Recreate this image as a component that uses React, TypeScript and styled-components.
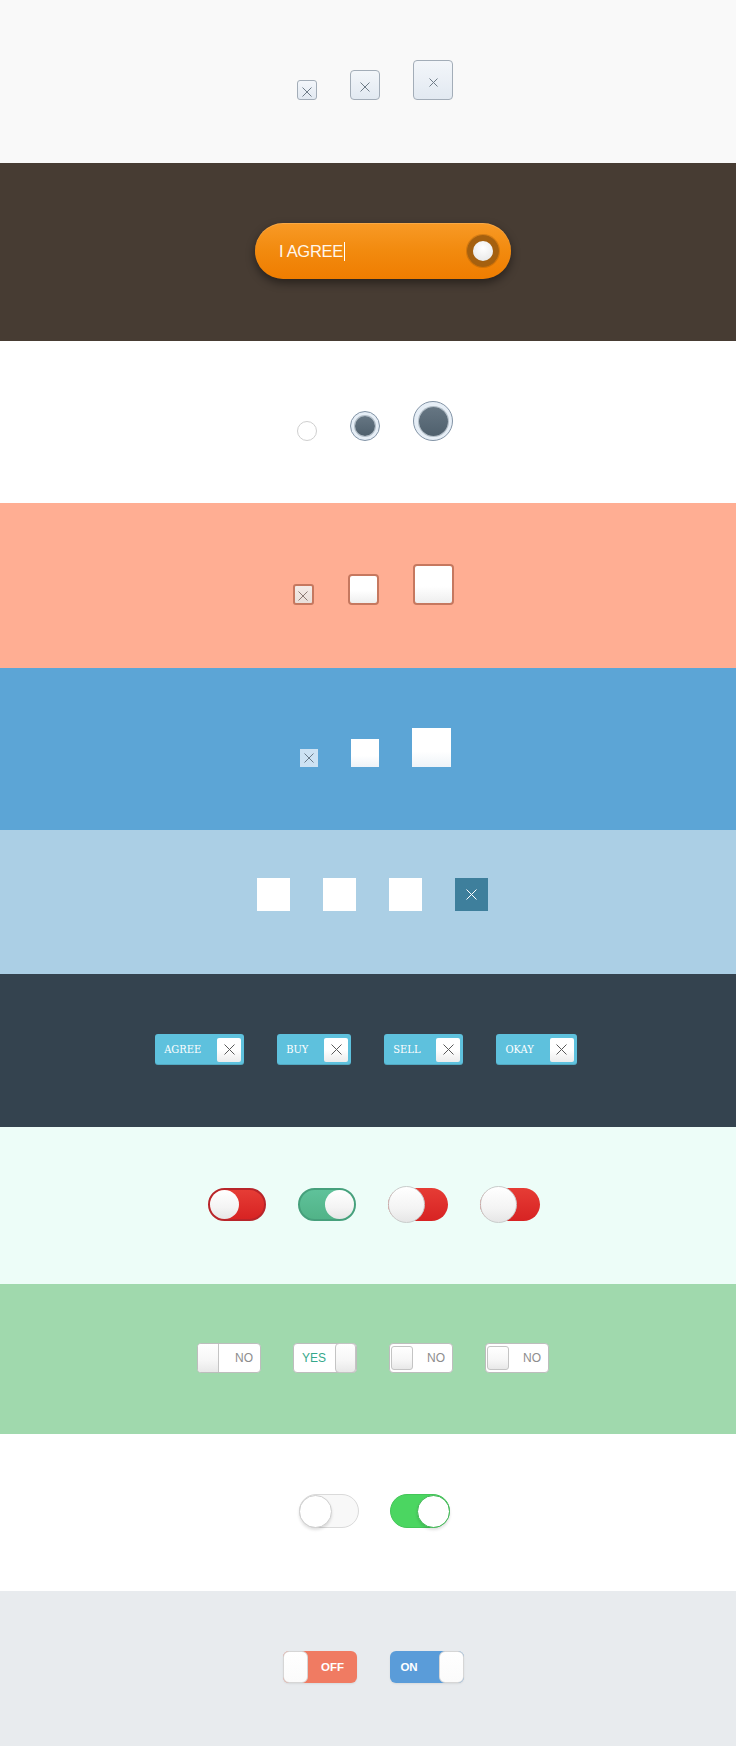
import React from "react";
import styled, { createGlobalStyle } from "styled-components";

const Global = createGlobalStyle`
  html, body { margin: 0; padding: 0; }
  body { font-family: "Liberation Sans", Arial, sans-serif; width: 736px; }
  * { box-sizing: border-box; }
`;

const Section = styled.section<{ $bg: string; $h: number; $pt: number; $shift?: number }>`
  background: ${(p) => p.$bg};
  height: ${(p) => p.$h}px;
  padding-top: ${(p) => p.$pt}px;
  padding-left: ${(p) => Math.max(0, (p.$shift ?? 0) * 2)}px;
  padding-right: ${(p) => Math.max(0, -(p.$shift ?? 0) * 2)}px;
  display: flex;
  justify-content: center;
  align-items: flex-start;
`;

const Row = styled.div<{ $gap: number; $align?: string }>`
  display: flex;
  align-items: ${(p) => p.$align ?? "flex-end"};
  gap: ${(p) => p.$gap}px;
`;

const XMark = ({ size, color, w = 1 }: { size: number; color: string; w?: number }) => (
  <svg width={size} height={size} viewBox={`0 0 ${size} ${size}`} style={{ display: "block" }}>
    <path d={`M0.5 0.5L${size - 0.5} ${size - 0.5}M${size - 0.5} 0.5L0.5 ${size - 0.5}`} stroke={color} strokeWidth={w} fill="none" />
  </svg>
);

/* Section 1: soft checkboxes */
const SoftBox = styled.div<{ $size: number }>`
  width: ${(p) => p.$size}px;
  height: ${(p) => p.$size}px;
  border: 1px solid #a3adb8;
  border-radius: ${(p) => (p.$size > 25 ? 4 : 3)}px;
  background: linear-gradient(#f3f6fa, #e2e9f1);
  display: flex;
  align-items: center;
  justify-content: center;
  padding-top: 4px;
`;

/* Section 2: agree pill */
const AgreePill = styled.div`
  width: 256px;
  height: 56px;
  border-radius: 28px;
  background: linear-gradient(#f89a26, #f28a0e 50%, #ef7d00);
  box-shadow: 0 4px 10px rgba(0, 0, 0, 0.45), inset 0 1px 0 rgba(255, 255, 255, 0.15);
  display: flex;
  align-items: center;
  justify-content: space-between;
  padding: 0 12px 0 24px;
`;

const AgreeText = styled.span`
  color: #fff7ec;
  font-family: "Liberation Sans", Arial, sans-serif;
  font-size: 16.5px;
  font-weight: 400;
  display: flex;
  align-items: center;
  letter-spacing: -0.3px;
`;

const Caret = styled.span`
  display: inline-block;
  width: 1px;
  height: 19px;
  background: #fff;
  margin-left: 1px;
`;

const AgreeKnob = styled.div`
  width: 32px;
  height: 32px;
  border-radius: 50%;
  border: 6px solid #a5600f;
  background: radial-gradient(circle at 50% 35%, #ffffff, #ececec 70%, #dcdcdc);
  box-shadow: 0 0 0 1px rgba(120, 60, 0, 0.25);
`;

/* Section 3: radios */
const Radio = styled.div<{ $size: number; $on?: boolean }>`
  width: ${(p) => p.$size}px;
  height: ${(p) => p.$size}px;
  border-radius: 50%;
  border: ${(p) => (p.$on ? "1px solid #8394a6" : "1.5px solid #cfcfcf")};
  background: ${(p) => (p.$on ? "#e6eef6" : "#fff")};
  display: flex;
  align-items: center;
  justify-content: center;
`;

const RadioDot = styled.div<{ $size: number }>`
  width: ${(p) => p.$size}px;
  height: ${(p) => p.$size}px;
  border-radius: 50%;
  background: linear-gradient(#667683, #4f606d);
  box-shadow: 0 0 0 1px rgba(79, 96, 109, 0.35);
`;

/* Section 4: salmon checkboxes */
const SalmonBox = styled.div<{ $size: number; $checked?: boolean }>`
  width: ${(p) => p.$size}px;
  height: ${(p) => p.$size}px;
  border: 2px solid #c6785f;
  border-radius: ${(p) => (p.$size > 25 ? 4 : 3)}px;
  background: ${(p) => (p.$checked ? "linear-gradient(#f4ece8, #e9dfda)" : "linear-gradient(#ffffff, #ffffff 55%, #eeeeee)")};
  display: flex;
  align-items: center;
  justify-content: center;
  padding-top: 3px;
`;

/* Section 5: flat blue checkboxes */
const FlatBox = styled.div<{ $size: number; $checked?: boolean }>`
  width: ${(p) => p.$size}px;
  height: ${(p) => p.$size}px;
  background: ${(p) => (p.$checked ? "#cde2f3" : "linear-gradient(#ffffff, #ffffff 60%, #eef3f8)")};
  display: flex;
  align-items: center;
  justify-content: center;
`;

/* Section 6: squares */
const Square = styled.div<{ $on?: boolean }>`
  width: 33px;
  height: 33px;
  background: ${(p) => (p.$on ? "#3e7f9c" : "#ffffff")};
  display: flex;
  align-items: center;
  justify-content: center;
`;

/* Section 7: tags */
const Tag = styled.div`
  height: 31px;
  display: flex;
  align-items: center;
  background: #5ec1dd;
  border-radius: 3px;
  box-shadow: inset 0 -1px 0 rgba(0, 0, 0, 0.12);
  padding: 0 3px 0 9px;
`;

const TagLabel = styled.span`
  font-family: "DejaVu Serif Condensed", "Liberation Serif", "Times New Roman", serif;
  font-stretch: condensed;
  font-size: 11px;
  color: #ffffff;
  margin-right: 16px;
  min-width: 22px;
  padding-bottom: 1px;
`;

const TagClose = styled.div`
  width: 24px;
  height: 24px;
  border-radius: 2px;
  background: linear-gradient(#ffffff, #ffffff 50%, #ececec);
  display: flex;
  align-items: center;
  justify-content: center;
`;

/* Section 8: round toggles */
const PillToggle = styled.div<{ $w: number; $color: string; $border?: string; $on?: boolean }>`
  width: ${(p) => p.$w}px;
  height: 33px;
  border-radius: 17px;
  background: ${(p) => p.$color};
  border: ${(p) => (p.$border ? `2px solid ${p.$border}` : "none")};
  display: flex;
  align-items: center;
  justify-content: ${(p) => (p.$on ? "flex-end" : "flex-start")};
`;

const PillKnob = styled.div<{ $size: number; $ring?: string }>`
  flex-shrink: 0;
  width: ${(p) => p.$size}px;
  height: ${(p) => p.$size}px;
  border-radius: 50%;
  background: linear-gradient(#ffffff, #f4f4f4 60%, #e6e6e6);
  border: ${(p) => (p.$ring ? `1px solid ${p.$ring}` : "none")};
`;

/* Section 9: slide switches */
const SlideSwitch = styled.div<{ $on?: boolean }>`
  width: 64px;
  height: 30px;
  border: 1px solid #bdbdbd;
  border-radius: 4px;
  background: #ffffff;
  display: flex;
  align-items: center;
  flex-direction: ${(p) => (p.$on ? "row-reverse" : "row")};
`;

const SlideKnob = styled.div<{ $inset?: boolean; $on?: boolean }>`
  flex-shrink: 0;
  width: ${(p) => (p.$inset ? 22 : 21)}px;
  height: ${(p) => (p.$inset ? 24 : p.$on ? 30 : 28)}px;
  margin: ${(p) => (p.$inset ? "0 0 0 1px" : "0")};
  background: linear-gradient(#ffffff, #f6f6f6 60%, #e8e8e8);
  border: 1px solid #c4c4c4;
  border-radius: 3px;
  ${(p) => (!p.$inset && !p.$on ? "border-width: 0 1px 0 0; border-radius: 3px 0 0 3px;" : "")}
  ${(p) => (p.$on ? "border-radius: 4px;" : "")}
`;

const SlideLabel = styled.span<{ $on?: boolean }>`
  flex: 1;
  font-size: 12px;
  font-family: "Liberation Sans", Arial, sans-serif;
  color: ${(p) => (p.$on ? "#35a88a" : "#8d8d8d")};
  text-align: ${(p) => (p.$on ? "left" : "right")};
  padding: ${(p) => (p.$on ? "0 0 0 8px" : "0 7px 0 0")};
`;

/* Section 10: iOS toggles */
const IosToggle = styled.div<{ $on?: boolean }>`
  width: 60px;
  height: 34px;
  border-radius: 17px;
  background: ${(p) => (p.$on ? "#4bd661" : "#f8f8f8")};
  border: 1px solid ${(p) => (p.$on ? "#44c659" : "#dadada")};
  display: flex;
  align-items: center;
  justify-content: ${(p) => (p.$on ? "flex-end" : "flex-start")};
`;

const IosKnob = styled.div<{ $on?: boolean }>`
  flex-shrink: 0;
  width: 33px;
  height: 33px;
  margin: ${(p) => (p.$on ? "0 -1px 0 0" : "0 0 0 -1px")};
  border-radius: 50%;
  background: #ffffff;
  border: 1px solid ${(p) => (p.$on ? "#3fb654" : "#cfcfcf")};
  box-shadow: 0 2px 3px rgba(0, 0, 0, 0.12);
`;

/* Section 11: flat labelled switches */
const FlatSwitch = styled.div<{ $color: string; $on?: boolean }>`
  width: 74px;
  height: 32px;
  border-radius: 6px;
  background: ${(p) => p.$color};
  display: flex;
  align-items: stretch;
  flex-direction: ${(p) => (p.$on ? "row-reverse" : "row")};
  box-shadow: 0 1px 2px rgba(0, 0, 0, 0.08);
`;

const FlatKnob = styled.div`
  width: 25px;
  flex-shrink: 0;
  border-radius: 6px;
  background: linear-gradient(#ffffff, #fbfbfb);
  border: 1px solid #d6d6d6;
`;

const FlatLabel = styled.span<{ $on?: boolean }>`
  flex: 1;
  display: flex;
  align-items: center;
  justify-content: center;
  color: #ffffff;
  font-weight: 700;
  font-size: 11.5px;
  font-family: "Liberation Sans", Arial, sans-serif;
  padding: ${(p) => (p.$on ? "0 10px 0 0" : "0 0 0 1px")};
`;

export default function App() {
  return (
    <>
      <Global />
      <Section $bg="#f9f9f9" $h={163} $pt={60} $shift={7}>
        <Row $gap={33}>
          <SoftBox $size={20}>
            <XMark size={10} color="#6f7c88" />
          </SoftBox>
          <SoftBox $size={30}>
            <XMark size={10} color="#6f7c88" />
          </SoftBox>
          <SoftBox $size={40}>
            <XMark size={9} color="#6f7c88" />
          </SoftBox>
        </Row>
      </Section>

      <Section $bg="#473c33" $h={178} $pt={60} $shift={15}>
        <AgreePill>
          <AgreeText>
            I AGREE
            <Caret />
          </AgreeText>
          <AgreeKnob />
        </AgreePill>
      </Section>

      <Section $bg="#ffffff" $h={162} $pt={60} $shift={7}>
        <Row $gap={33}>
          <Radio $size={20} />
          <Radio $size={30} $on>
            <RadioDot $size={20} />
          </Radio>
          <Radio $size={40} $on>
            <RadioDot $size={29} />
          </Radio>
        </Row>
      </Section>

      <Section $bg="#ffae93" $h={165} $pt={61} $shift={5}>
        <Row $gap={34}>
          <SalmonBox $size={21} $checked>
            <XMark size={10} color="#8a7a74" />
          </SalmonBox>
          <SalmonBox $size={31} />
          <SalmonBox $size={41} />
        </Row>
      </Section>

      <Section $bg="#5ca5d6" $h={162} $pt={60} $shift={7}>
        <Row $gap={33}>
          <FlatBox $size={18} $checked>
            <XMark size={10} color="#6a7b8a" />
          </FlatBox>
          <FlatBox $size={28} />
          <FlatBox $size={39} />
        </Row>
      </Section>

      <Section $bg="#abcfe5" $h={144} $pt={48} $shift={4}>
        <Row $gap={33}>
          <Square />
          <Square />
          <Square />
          <Square $on>
            <XMark size={11} color="#ffffff" />
          </Square>
        </Row>
      </Section>

      <Section $bg="#34434f" $h={153} $pt={60} $shift={-2}>
        <Row $gap={33} $align="center">
          {["AGREE", "BUY", "SELL", "OKAY"].map((t) => (
            <Tag key={t}>
              <TagLabel>{t}</TagLabel>
              <TagClose>
                <XMark size={11} color="#5a5a5a" />
              </TagClose>
            </Tag>
          ))}
        </Row>
      </Section>

      <Section $bg="#edfdf8" $h={157} $pt={61} $shift={6}>
        <Row $gap={32} $align="center">
          <PillToggle $w={58} $color="linear-gradient(#e63c35, #d72323)" $border="#b8252a">
            <PillKnob $size={29} />
          </PillToggle>
          <PillToggle $w={58} $color="linear-gradient(#5fc29a, #51b388)" $border="#46a07c" $on>
            <PillKnob $size={29} />
          </PillToggle>
          <PillToggle $w={60} $color="linear-gradient(#e63c35, #d72323)">
            <PillKnob $size={37} $ring="#c9cccb" />
          </PillToggle>
          <PillToggle $w={60} $color="linear-gradient(#e63c35, #d72323)">
            <PillKnob $size={37} $ring="#c9cccb" />
          </PillToggle>
        </Row>
      </Section>

      <Section $bg="#a0d9ad" $h={150} $pt={59} $shift={5}>
        <Row $gap={32} $align="center">
          <SlideSwitch>
            <SlideKnob />
            <SlideLabel>NO</SlideLabel>
          </SlideSwitch>
          <SlideSwitch $on>
            <SlideKnob $on />
            <SlideLabel $on>YES</SlideLabel>
          </SlideSwitch>
          <SlideSwitch>
            <SlideKnob $inset />
            <SlideLabel>NO</SlideLabel>
          </SlideSwitch>
          <SlideSwitch>
            <SlideKnob $inset />
            <SlideLabel>NO</SlideLabel>
          </SlideSwitch>
        </Row>
      </Section>

      <Section $bg="#ffffff" $h={157} $pt={60} $shift={6}>
        <Row $gap={31} $align="center">
          <IosToggle>
            <IosKnob />
          </IosToggle>
          <IosToggle $on>
            <IosKnob $on />
          </IosToggle>
        </Row>
      </Section>

      <Section $bg="#e8ebee" $h={155} $pt={60} $shift={5}>
        <Row $gap={33} $align="center">
          <FlatSwitch $color="#f07b62">
            <FlatKnob />
            <FlatLabel>OFF</FlatLabel>
          </FlatSwitch>
          <FlatSwitch $color="#5a9cd9" $on>
            <FlatKnob />
            <FlatLabel $on>ON</FlatLabel>
          </FlatSwitch>
        </Row>
      </Section>
    </>
  );
}
